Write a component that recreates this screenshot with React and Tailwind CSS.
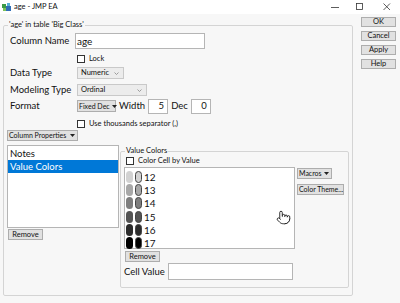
import React from 'react';
import { Pointer } from 'lucide-react';

const font = { fontFamily: 'Lato, "Open Sans", sans-serif' };

// Small grey push button, Windows classic style
const Btn = ({ children, className = '' }) => (
  <div
    className={`flex items-center justify-center whitespace-nowrap bg-[#e1e1e1] border border-[#adadad] text-[7.5px] leading-none text-[#111] ${className}`}
  >
    {children}
  </div>
);

const Check = ({ label, className = '' }) => (
  <div className={`flex items-center gap-[4px] whitespace-nowrap ${className}`}>
    <div className="w-[8px] h-[8px] border border-[#333] bg-white" />
    <span className="text-[7.5px] leading-none text-[#111]">{label}</span>
  </div>
);

const Combo = ({ label, className = '' }) => (
  <div
    className={`flex items-center justify-between bg-[#ececec] border border-[#c9c9c9] pl-[3px] pr-[4px] text-[7.5px] leading-none text-[#111] ${className}`}
  >
    <span>{label}</span>
    <svg width="5" height="3" viewBox="0 0 5 3">
      <path d="M0.5 0.5 L2.5 2.5 L4.5 0.5" fill="none" stroke="#888" strokeWidth="0.8" />
    </svg>
  </div>
);

// Button with a drop-down triangle
const MenuBtn = ({ label, className = '' }) => (
  <div
    className={`flex items-center justify-between gap-[2px] whitespace-nowrap bg-[#e1e1e1] border border-[#adadad] pl-[1px] pr-[2px] text-[7px] leading-none text-[#111] ${className}`}
  >
    <span>{label}</span>
    <svg width="5" height="3" viewBox="0 0 5 3" className="shrink-0">
      <path d="M0 0 L5 0 L2.5 3 Z" fill="#222" />
    </svg>
  </div>
);

const Box = ({ children, className = '' }) => (
  <div className={`bg-white border border-[#b5b5b5] ${className}`}>{children}</div>
);

const Label = ({ children, className = '' }) => (
  <span className={`shrink-0 whitespace-nowrap text-[9.5px] leading-none ${className}`}>{children}</span>
);

const colors = [
  { v: 12, c: '#d2d2d2' },
  { v: 13, c: '#a8a8a8' },
  { v: 14, c: '#7e7e7e' },
  { v: 15, c: '#545454' },
  { v: 16, c: '#2c2c2c' },
  { v: 17, c: '#000000' },
];

export default function App() {
  return (
    <div className="w-[400px] h-[303px] bg-[#f7f7f7] overflow-hidden text-[#111]" style={font}>
      {/* Title bar */}
      <div className="h-[14px] bg-white flex items-center pl-[2px]">
        <svg width="9" height="9" viewBox="0 0 9 9">
          <rect x="0" y="1" width="4" height="4" fill="#3c9a46" />
          <rect x="4" y="3" width="5" height="5" fill="#2f6db5" />
          <rect x="1" y="5" width="3" height="3" fill="#7cc35a" />
          <rect x="5" y="0" width="3" height="3" fill="#58b0d8" />
        </svg>
        <span className="ml-[3px] text-[7.5px] leading-none">age - JMP EA</span>
        <div className="ml-auto flex items-center">
          <svg width="10" height="10" viewBox="0 0 10 10" className="mr-[15px]">
            <path d="M1 5.5 H9" stroke="#333" strokeWidth="0.8" />
          </svg>
          <svg width="10" height="10" viewBox="0 0 10 10" className="mr-[17px]">
            <rect x="1.5" y="1.5" width="6" height="6" fill="none" stroke="#333" strokeWidth="0.8" />
          </svg>
          <svg width="10" height="10" viewBox="0 0 10 10" className="mr-[8px]">
            <path d="M1.5 1.5 L8 8 M8 1.5 L1.5 8" stroke="#333" strokeWidth="0.8" />
          </svg>
        </div>
      </div>

      <div className="flex pl-[3px]">
        {/* Main group */}
        <fieldset className="mt-[6px] w-[350px] h-[276px] border border-[#d4d4d4] rounded-[2px] pl-[3px]">
          <legend className="ml-[1px] px-[1px] whitespace-nowrap text-[7.5px] leading-[10px]">'age' in table 'Big Class'</legend>

          <div className="flex items-center h-[16px] mt-[3px]">
            <Label className="w-[68px] pl-[3px]">Column Name</Label>
            <Box className="w-[130px] h-[16px] flex items-center pl-[1px] text-[10px] leading-none">age</Box>
          </div>

          <div className="flex items-center h-[11px] mt-[4px] pl-[70px]">
            <Check label="Lock" />
          </div>

          <div className="flex items-center h-[12px] mt-[3px]">
            <Label className="w-[70px] pl-[3px]">Data Type</Label>
            <Combo label="Numeric" className="w-[47px] h-[12px]" />
          </div>

          <div className="flex items-center h-[12px] mt-[5px]">
            <Label className="w-[70px] pl-[3px]">Modeling Type</Label>
            <Combo label="Ordinal" className="w-[70px] h-[12px]" />
          </div>

          <div className="flex items-center h-[14px] mt-[3px]">
            <Label className="w-[70px] pl-[3px]">Format</Label>
            <MenuBtn label="Fixed Dec" className="h-[12px] w-[39px]" />
            <Label className="ml-[3px]">Width</Label>
            <Box className="ml-[3px] w-[20px] h-[15px] flex items-center justify-end pr-[3px] text-[9.5px] leading-none">5</Box>
            <Label className="ml-[3px]">Dec</Label>
            <Box className="ml-[3px] w-[20px] h-[15px] flex items-center justify-end pr-[3px] text-[9.5px] leading-none">0</Box>
          </div>

          <div className="flex items-center h-[9px] mt-[6px] pl-[70px]">
            <Check label="Use thousands separator (,)" />
          </div>

          <div className="mt-[2px]">
            <MenuBtn label="Column Properties" className="h-[11px] w-[71px]" />
          </div>

          <div className="flex mt-[4px]">
            <div className="flex flex-col">
              <Box className="w-[112px] h-[83px] pt-[1px] text-[9.5px] leading-[13px]">
                <div className="px-[2px]">Notes</div>
                <div className="px-[2px] bg-[#0078d7] text-white">Value Colors</div>
              </Box>
              <Btn className="mt-[1px] ml-[1px] w-[35px] h-[11px]">Remove</Btn>
            </div>

            <fieldset className="ml-[1px] mt-[1px] w-[229px] h-[142px] border border-[#d4d4d4] rounded-[2px] pl-[3px]">
              <legend className="ml-[1px] px-[1px] whitespace-nowrap text-[7.5px] leading-[10px]">Value Colors</legend>
              <Check label="Color Cell by Value" className="ml-[2px] h-[9px]" />
              <div className="flex mt-[2px]">
                <Box className="relative w-[171px] h-[82px] pl-[1px] pt-[2px]">
                  {colors.map((r) => (
                    <div key={r.v} className="flex items-center h-[13.3px]">
                      <div className="w-[7px] h-[12px] rounded-full" style={{ background: r.c }} />
                      <div
                        className="ml-[2px] w-[7px] h-[12px] rounded-full border border-[#444]"
                        style={{ background: r.c }}
                      />
                      <span className="ml-[2px] text-[10px] leading-none">{r.v}</span>
                    </div>
                  ))}
                  <Pointer
                    size={15}
                    strokeWidth={1.3}
                    fill="white"
                    className="absolute left-[151px] top-[42px] text-black"
                  />
                </Box>
                <div className="flex flex-col ml-[2px] mt-[1px]">
                  <MenuBtn label="Macros" className="h-[11px] w-[35px]" />
                  <Btn className="mt-[5px] h-[11px] w-[47px] !justify-start pl-[1px] !text-[7px]">Color Theme...</Btn>
                </div>
              </div>
              <Btn className="mt-[2px] ml-[1px] w-[35px] h-[11px]">Remove</Btn>
              <div className="flex items-center mt-[1px]">
                <Label className="w-[44px]">Cell Value</Label>
                <Box className="w-[125px] h-[17px]" />
              </div>
            </fieldset>
          </div>
        </fieldset>

        {/* Dialog buttons */}
        <div className="ml-[8px] mt-[3px] flex flex-col gap-[4px]">
          <Btn className="w-[35px] h-[10px]">OK</Btn>
          <Btn className="w-[35px] h-[10px]">Cancel</Btn>
          <Btn className="w-[35px] h-[10px]">Apply</Btn>
          <Btn className="w-[35px] h-[10px]">Help</Btn>
        </div>
      </div>
    </div>
  );
}
